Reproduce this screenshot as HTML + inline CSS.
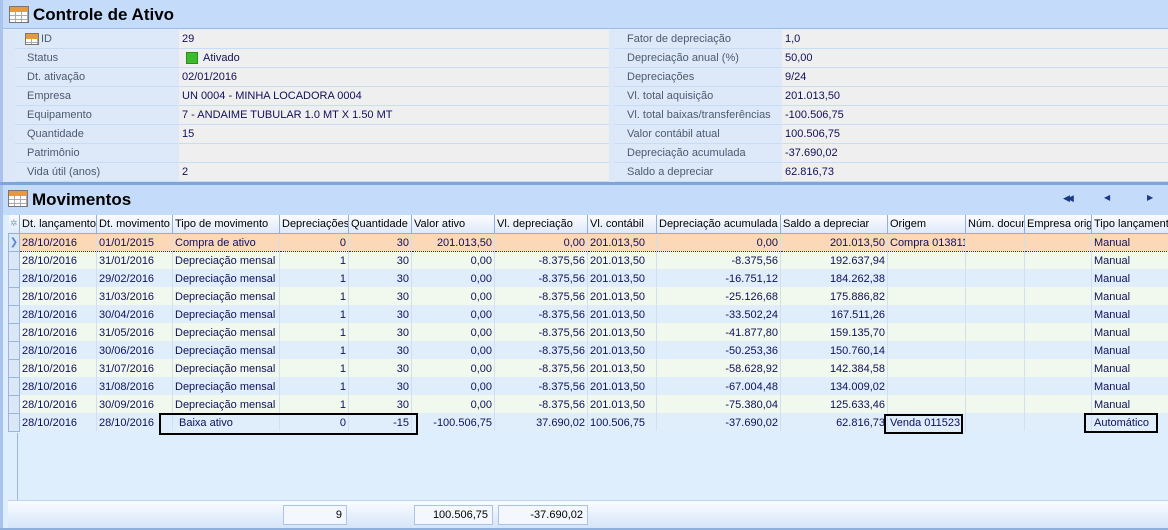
<!DOCTYPE html>
<html><head><meta charset="utf-8"><style>
*{margin:0;padding:0;box-sizing:border-box}
body{width:1168px;height:530px;overflow:hidden;background:#dfeefc;font-family:"Liberation Sans",Tahoma,sans-serif;font-size:11px;color:#10105a;position:relative}
.abs{position:absolute}
.title{left:3px;top:0;width:1165px;height:29px;background:#c4dbfa;border-bottom:1px solid #9dbbe6}
.title span{position:absolute;left:30px;top:5px;font-size:17px;font-weight:bold;color:#000}
.icon{position:absolute;width:20px;height:17px;border:1px solid #777;background:linear-gradient(#e79a3b 0 5px,#fff 5px);}
.icon:after{content:"";position:absolute;inset:5px 0 0 0;background:repeating-linear-gradient(90deg,transparent 0 5px,#aaa 5px 6px),repeating-linear-gradient(transparent 0 3px,#aaa 3px 4px)}
.info{left:0;top:30px;width:1168px;height:152px;background:#dce8f8;border-left:3px solid #a8c4ec}
.r{position:absolute;height:19px;line-height:19px;border-bottom:1px solid #c8dcf6}
.lab{color:#4c5a70;background:#dde9f9}
.val{background:#efefef;color:#10105a}
table{border-collapse:collapse;table-layout:fixed;position:absolute;left:8px;top:215px;width:1163px}
td{height:18px;padding:1px 2px 0;white-space:nowrap;overflow:hidden;border-right:1px solid #d0e0f0;font-size:11px}
th{height:18px;font-weight:normal;text-align:left;padding:0 2px;background:linear-gradient(#fbfcfe,#dfeafa);border-right:1px solid #8fb0dc;border-bottom:1px solid #8fb0dc;color:#000;white-space:nowrap;overflow:hidden;font-size:11px}
td.n{text-align:right}
tr.s td{background:#fbd8b7;border-top:1px dotted #333;border-bottom:1px dotted #333}
tr.g td{background:#f1f8ee}
tr.b td{background:#e0eefc}
td.ind{background:#dbe7f7 !important;border:1px solid #9ab6de;padding:0}
.box{position:absolute;border:2px solid #000}
.foot{left:8px;top:500px;width:1160px;height:28px;background:linear-gradient(#fafcff,#d5e5f8);border-top:1px solid #c0d4ee}
.fb{position:absolute;top:505px;height:20px;border:1px solid #aac4e6;background:#f4f8fe;text-align:right;padding-right:4px;line-height:19px;color:#000}
</style></head><body>
<div class="abs" style="left:0;top:0;width:3px;height:530px;background:#a8c4ec"></div>
<div class="abs title"><div class="icon" style="left:6px;top:6px"></div><span>Controle de Ativo</span></div>
<div class="abs info">
<div class="r lab" style="left:12px;top:0;width:163px;padding-left:26px"><div class="icon" style="left:10px;top:3px;width:14px;height:12px"></div>ID</div>
<div class="r lab" style="left:12px;top:19px;width:163px;padding-left:12px">Status</div>
<div class="r lab" style="left:12px;top:38px;width:163px;padding-left:12px">Dt. ativação</div>
<div class="r lab" style="left:12px;top:57px;width:163px;padding-left:12px">Empresa</div>
<div class="r lab" style="left:12px;top:76px;width:163px;padding-left:12px">Equipamento</div>
<div class="r lab" style="left:12px;top:95px;width:163px;padding-left:12px">Quantidade</div>
<div class="r lab" style="left:12px;top:114px;width:163px;padding-left:12px">Patrimônio</div>
<div class="r lab" style="left:12px;top:133px;width:163px;padding-left:12px">Vida útil (anos)</div>
<div class="r val" style="left:176px;top:0;width:430px;padding-left:3px">29</div>
<div class="r val" style="left:176px;top:19px;width:430px;padding-left:24px"><span style="position:absolute;left:7px;top:3px;width:12px;height:12px;background:#3cbc2c;border:1px solid #2a8a20"></span>Ativado</div>
<div class="r val" style="left:176px;top:38px;width:430px;padding-left:3px">02/01/2016</div>
<div class="r val" style="left:176px;top:57px;width:430px;padding-left:3px">UN 0004 - MINHA LOCADORA 0004</div>
<div class="r val" style="left:176px;top:76px;width:430px;padding-left:3px">7 - ANDAIME TUBULAR 1.0 MT X 1.50 MT</div>
<div class="r val" style="left:176px;top:95px;width:430px;padding-left:3px">15</div>
<div class="r val" style="left:176px;top:114px;width:430px;padding-left:3px"></div>
<div class="r val" style="left:176px;top:133px;width:430px;padding-left:3px">2</div>
<div class="r lab" style="left:612px;top:0;width:166px;padding-left:12px">Fator de depreciação</div>
<div class="r lab" style="left:612px;top:19px;width:166px;padding-left:12px">Depreciação anual (%)</div>
<div class="r lab" style="left:612px;top:38px;width:166px;padding-left:12px">Depreciações</div>
<div class="r lab" style="left:612px;top:57px;width:166px;padding-left:12px">Vl. total aquisição</div>
<div class="r lab" style="left:612px;top:76px;width:166px;padding-left:12px">Vl. total baixas/transferências</div>
<div class="r lab" style="left:612px;top:95px;width:166px;padding-left:12px">Valor contábil atual</div>
<div class="r lab" style="left:612px;top:114px;width:166px;padding-left:12px">Depreciação acumulada</div>
<div class="r lab" style="left:612px;top:133px;width:166px;padding-left:12px">Saldo a depreciar</div>
<div class="r val" style="left:779px;top:0;width:389px;padding-left:3px">1,0</div>
<div class="r val" style="left:779px;top:19px;width:389px;padding-left:3px">50,00</div>
<div class="r val" style="left:779px;top:38px;width:389px;padding-left:3px">9/24</div>
<div class="r val" style="left:779px;top:57px;width:389px;padding-left:3px">201.013,50</div>
<div class="r val" style="left:779px;top:76px;width:389px;padding-left:3px">-100.506,75</div>
<div class="r val" style="left:779px;top:95px;width:389px;padding-left:3px">100.506,75</div>
<div class="r val" style="left:779px;top:114px;width:389px;padding-left:3px">-37.690,02</div>
<div class="r val" style="left:779px;top:133px;width:389px;padding-left:3px">62.816,73</div>
</div>
<div class="abs" style="left:0;top:182px;width:1168px;height:3px;background:#7fa4d8"></div>
<div class="abs" style="left:3px;top:185px;width:1165px;height:30px;background:#c4dbfa"><div class="icon" style="left:5px;top:5px"></div><span style="position:absolute;left:29px;top:5px;font-size:17px;font-weight:bold;color:#000">Movimentos</span>
<span style="position:absolute;left:1060px;top:8px;font-size:9px;color:#1a3a8a;letter-spacing:-3px">◀◀</span>
<span style="position:absolute;left:1101px;top:8px;font-size:8px;color:#1a3a8a">◀</span>
<span style="position:absolute;left:1144px;top:8px;font-size:8px;color:#1a3a8a">▶</span></div>
<table>
<colgroup><col style="width:11px"><col style="width:77px"><col style="width:76px"><col style="width:107px"><col style="width:69px"><col style="width:63px"><col style="width:83px"><col style="width:93px"><col style="width:69px"><col style="width:124px"><col style="width:107px"><col style="width:78px"><col style="width:59px"><col style="width:67px"><col style="width:80px"></colgroup>
<tr><th style="padding:0;color:#8ab;font-size:9px;text-align:center">✲</th><th>Dt. lançamento</th><th>Dt. movimento</th><th>Tipo de movimento</th><th>Depreciações</th><th>Quantidade</th><th>Valor ativo</th><th>Vl. depreciação</th><th>Vl. contábil</th><th>Depreciação acumulada</th><th>Saldo a depreciar</th><th>Origem</th><th>Núm. documento</th><th>Empresa origem</th><th>Tipo lançamento</th></tr>
<tr class="s"><td class="ind" style="color:#5a8ad0;font-size:10px;text-align:center">❯</td><td>28/10/2016</td><td>01/01/2015</td><td>Compra de ativo</td><td class="n">0</td><td class="n">30</td><td class="n">201.013,50</td><td class="n">0,00</td><td>201.013,50</td><td class="n">0,00</td><td class="n">201.013,50</td><td>Compra 013811</td><td></td><td></td><td>Manual</td></tr>
<tr class="g"><td class="ind"></td><td>28/10/2016</td><td>31/01/2016</td><td>Depreciação mensal</td><td class="n">1</td><td class="n">30</td><td class="n">0,00</td><td class="n">-8.375,56</td><td>201.013,50</td><td class="n">-8.375,56</td><td class="n">192.637,94</td><td></td><td></td><td></td><td>Manual</td></tr>
<tr class="b"><td class="ind"></td><td>28/10/2016</td><td>29/02/2016</td><td>Depreciação mensal</td><td class="n">1</td><td class="n">30</td><td class="n">0,00</td><td class="n">-8.375,56</td><td>201.013,50</td><td class="n">-16.751,12</td><td class="n">184.262,38</td><td></td><td></td><td></td><td>Manual</td></tr>
<tr class="g"><td class="ind"></td><td>28/10/2016</td><td>31/03/2016</td><td>Depreciação mensal</td><td class="n">1</td><td class="n">30</td><td class="n">0,00</td><td class="n">-8.375,56</td><td>201.013,50</td><td class="n">-25.126,68</td><td class="n">175.886,82</td><td></td><td></td><td></td><td>Manual</td></tr>
<tr class="b"><td class="ind"></td><td>28/10/2016</td><td>30/04/2016</td><td>Depreciação mensal</td><td class="n">1</td><td class="n">30</td><td class="n">0,00</td><td class="n">-8.375,56</td><td>201.013,50</td><td class="n">-33.502,24</td><td class="n">167.511,26</td><td></td><td></td><td></td><td>Manual</td></tr>
<tr class="g"><td class="ind"></td><td>28/10/2016</td><td>31/05/2016</td><td>Depreciação mensal</td><td class="n">1</td><td class="n">30</td><td class="n">0,00</td><td class="n">-8.375,56</td><td>201.013,50</td><td class="n">-41.877,80</td><td class="n">159.135,70</td><td></td><td></td><td></td><td>Manual</td></tr>
<tr class="b"><td class="ind"></td><td>28/10/2016</td><td>30/06/2016</td><td>Depreciação mensal</td><td class="n">1</td><td class="n">30</td><td class="n">0,00</td><td class="n">-8.375,56</td><td>201.013,50</td><td class="n">-50.253,36</td><td class="n">150.760,14</td><td></td><td></td><td></td><td>Manual</td></tr>
<tr class="g"><td class="ind"></td><td>28/10/2016</td><td>31/07/2016</td><td>Depreciação mensal</td><td class="n">1</td><td class="n">30</td><td class="n">0,00</td><td class="n">-8.375,56</td><td>201.013,50</td><td class="n">-58.628,92</td><td class="n">142.384,58</td><td></td><td></td><td></td><td>Manual</td></tr>
<tr class="b"><td class="ind"></td><td>28/10/2016</td><td>31/08/2016</td><td>Depreciação mensal</td><td class="n">1</td><td class="n">30</td><td class="n">0,00</td><td class="n">-8.375,56</td><td>201.013,50</td><td class="n">-67.004,48</td><td class="n">134.009,02</td><td></td><td></td><td></td><td>Manual</td></tr>
<tr class="g"><td class="ind"></td><td>28/10/2016</td><td>30/09/2016</td><td>Depreciação mensal</td><td class="n">1</td><td class="n">30</td><td class="n">0,00</td><td class="n">-8.375,56</td><td>201.013,50</td><td class="n">-75.380,04</td><td class="n">125.633,46</td><td></td><td></td><td></td><td>Manual</td></tr>
<tr class="b"><td class="ind"></td><td>28/10/2016</td><td>28/10/2016</td><td style="padding-left:6px">Baixa ativo</td><td class="n">0</td><td class="n">-15</td><td class="n">-100.506,75</td><td class="n">37.690,02</td><td>100.506,75</td><td class="n">-37.690,02</td><td class="n">62.816,73</td><td style="padding-left:2px">Venda 011523</td><td></td><td></td><td style="padding-left:2px">Automático</td></tr>
</table>
<div class="box" style="left:159px;top:413px;width:259px;height:22px"></div>
<div class="box" style="left:884px;top:414px;width:79px;height:20px"></div>
<div class="box" style="left:1084px;top:413px;width:74px;height:20px"></div>
<div class="abs" style="left:7px;top:433px;width:11px;height:67px;border-right:1px solid #9ab6de"></div>
<div class="abs foot"></div>
<div class="fb" style="left:283px;width:64px">9</div>
<div class="fb" style="left:414px;width:79px">100.506,75</div>
<div class="fb" style="left:498px;width:90px">-37.690,02</div>
<div class="abs" style="left:0;top:528px;width:1168px;height:2px;background:#8fb0dc"></div>
</body></html>
